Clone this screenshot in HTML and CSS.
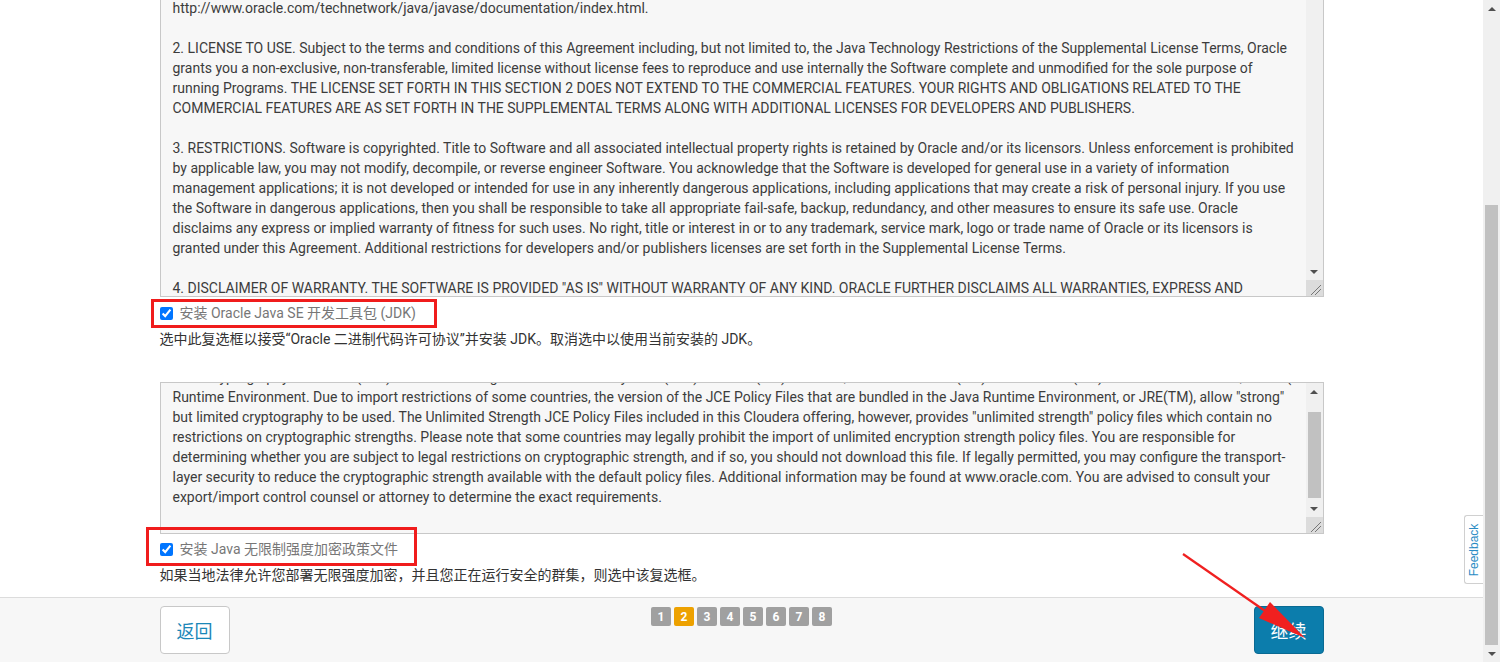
FILE: index.html
```html
<!DOCTYPE html>
<html lang="zh-CN">
<head>
<meta charset="utf-8">
<title>Cloudera 安装向导</title>
<link rel="stylesheet" href="styles.css">
</head>
<body>
<div class="page">
  <div class="content">
    <div class="wrap">
      <div class="ta ta1">
        <div class="ta-text">
          <div class="ta-inner ta1-inner">
            <div class="ln">http://www.oracle.com/technetwork/java/javase/documentation/index.html.</div>
            <div class="ln">&nbsp;</div>
            <div class="ln">2. LICENSE TO USE. Subject to the terms and conditions of this Agreement including, but not limited to, the Java Technology Restrictions of the Supplemental License Terms, Oracle</div>
            <div class="ln">grants you a non-exclusive, non-transferable, limited license without license fees to reproduce and use internally the Software complete and unmodified for the sole purpose of</div>
            <div class="ln">running Programs. THE LICENSE SET FORTH IN THIS SECTION 2 DOES NOT EXTEND TO THE COMMERCIAL FEATURES. YOUR RIGHTS AND OBLIGATIONS RELATED TO THE</div>
            <div class="ln">COMMERCIAL FEATURES ARE AS SET FORTH IN THE SUPPLEMENTAL TERMS ALONG WITH ADDITIONAL LICENSES FOR DEVELOPERS AND PUBLISHERS.</div>
            <div class="ln">&nbsp;</div>
            <div class="ln">3. RESTRICTIONS. Software is copyrighted. Title to Software and all associated intellectual property rights is retained by Oracle and/or its licensors. Unless enforcement is prohibited</div>
            <div class="ln">by applicable law, you may not modify, decompile, or reverse engineer Software. You acknowledge that the Software is developed for general use in a variety of information</div>
            <div class="ln">management applications; it is not developed or intended for use in any inherently dangerous applications, including applications that may create a risk of personal injury. If you use</div>
            <div class="ln">the Software in dangerous applications, then you shall be responsible to take all appropriate fail-safe, backup, redundancy, and other measures to ensure its safe use. Oracle</div>
            <div class="ln">disclaims any express or implied warranty of fitness for such uses. No right, title or interest in or to any trademark, service mark, logo or trade name of Oracle or its licensors is</div>
            <div class="ln">granted under this Agreement. Additional restrictions for developers and/or publishers licenses are set forth in the Supplemental License Terms.</div>
            <div class="ln">&nbsp;</div>
            <div class="ln">4. DISCLAIMER OF WARRANTY. THE SOFTWARE IS PROVIDED "AS IS" WITHOUT WARRANTY OF ANY KIND. ORACLE FURTHER DISCLAIMS ALL WARRANTIES, EXPRESS AND</div>
          </div>
        </div>
        <div class="sb">
          <div class="sb-track"></div>
          <div class="sb-btn"><span class="tri-down"></span></div>
          <div class="sb-corner"><svg width="17" height="16" viewBox="0 0 17 16"><path d="M5 15 L15 5 M9 15 L15 9" stroke="#777" stroke-width="1" fill="none"/></svg></div>
        </div>
      </div>

      <label class="check-row">
        <input type="checkbox" class="cb" checked>
        <span class="check-label">安装 Oracle Java SE 开发工具包 (JDK)</span>
      </label>
      <div class="desc">选中此复选框以接受“Oracle 二进制代码许可协议”并安装 JDK。取消选中以使用当前安装的 JDK。</div>

      <div class="ta ta2">
        <div class="ta-text">
          <div class="ta-inner ta2-inner">
            <div class="ln">Java Cryptography Extension (JCE) Unlimited Strength Jurisdiction Policy Files (JCE) for Java (TM) Platform, Standard Edition (TM) and the Java (TM) Runtime Environment, or JRE(TM) (the "Java</div>
            <div class="ln">Runtime Environment. Due to import restrictions of some countries, the version of the JCE Policy Files that are bundled in the Java Runtime Environment, or JRE(TM), allow "strong"</div>
            <div class="ln">but limited cryptography to be used. The Unlimited Strength JCE Policy Files included in this Cloudera offering, however, provides "unlimited strength" policy files which contain no</div>
            <div class="ln">restrictions on cryptographic strengths. Please note that some countries may legally prohibit the import of unlimited encryption strength policy files. You are responsible for</div>
            <div class="ln">determining whether you are subject to legal restrictions on cryptographic strength, and if so, you should not download this file. If legally permitted, you may configure the transport-</div>
            <div class="ln">layer security to reduce the cryptographic strength available with the default policy files. Additional information may be found at www.oracle.com. You are advised to consult your</div>
            <div class="ln">export/import control counsel or attorney to determine the exact requirements.</div>
          </div>
        </div>
        <div class="sb">
          <div class="sb-btn"><span class="tri-up"></span></div>
          <div class="sb-track sb-track2"><div class="sb-thumb sb-thumb2"></div></div>
          <div class="sb-btn"><span class="tri-down"></span></div>
          <div class="sb-corner"><svg width="17" height="16" viewBox="0 0 17 16"><path d="M5 15 L15 5 M9 15 L15 9" stroke="#777" stroke-width="1" fill="none"/></svg></div>
        </div>
      </div>

      <label class="check-row check-row2">
        <input type="checkbox" class="cb" checked>
        <span class="check-label">安装 Java 无限制强度加密政策文件</span>
      </label>
      <div class="desc">如果当地法律允许您部署无限强度加密，并且您正在运行安全的群集，则选中该复选框。</div>
    </div>
  </div>

  <div class="footer">
    <div class="footer-wrap">
      <button class="btn btn-back">返回</button>
      <div class="pager">
        <span class="pg">1</span>
        <span class="pg pg-active">2</span>
        <span class="pg">3</span>
        <span class="pg">4</span>
        <span class="pg">5</span>
        <span class="pg">6</span>
        <span class="pg">7</span>
        <span class="pg">8</span>
      </div>
      <button class="btn btn-next">继续</button>
    </div>
  </div>

  <div class="feedback"><span class="feedback-text">Feedback</span></div>
</div>

<div class="vscroll">
  <div class="sb-btn vs-btn"><span class="tri-up"></span></div>
  <div class="vs-track"><div class="vs-thumb"></div></div>
  <div class="sb-btn vs-btn"><span class="tri-down"></span></div>
</div>

<div class="mark mark1"></div>
<div class="mark mark2"></div>
<svg class="arrow" width="1500" height="662" viewBox="0 0 1500 662">
  <line x1="1183" y1="554" x2="1268" y2="613" stroke="#f02020" stroke-width="2.2"/>
  <polygon points="1305,638 1259,618 1270,602" fill="#f02020"/>
</svg>
</body>
</html>
```

FILE: styles.css
```css
* { box-sizing: border-box; }

html, body {
  margin: 0;
  padding: 0;
  height: 662px;
  overflow: hidden;
}

body {
  display: flex;
  font-family: Roboto, "Noto Sans CJK SC", sans-serif;
  font-size: 14px;
  color: #333;
  background: #fff;
  position: relative;
}

.page {
  width: 1483px;
  height: 662px;
  display: flex;
  flex-direction: column;
  position: relative;
}

.content {
  flex: 1;
  overflow: hidden;
  background: #fff;
}

.wrap {
  width: 1164px;
  margin: 0 auto;
}

/* textarea look-alike */
.ta {
  display: flex;
  border: 1px solid #c8c8c8;
  background: #f7f7f7;
  overflow: hidden;
}

.ta1 {
  height: 297px;
  border-top: 0;
}

.ta2 {
  height: 152px;
  margin-top: 33px;
}

.ta-text {
  flex: 1;
  overflow: hidden;
  padding: 0 12px;
}

.ta1-inner { margin-top: -2px; }
.ta2-inner { margin-top: -16px; }

.ln {
  line-height: 20px;
  white-space: nowrap;
  color: #3c3c3c;
}

/* inner scrollbar */
.sb {
  width: 17px;
  background: #f0f0f0;
  display: flex;
  flex-direction: column;
}

.sb-track {
  flex: 1;
  padding: 0 2px;
}

.sb-track2 {
  padding-top: 12px;
}

.sb-thumb {
  background: #c1c1c1;
}

.sb-thumb2 {
  height: 86px;
}

.sb-btn {
  height: 17px;
  display: flex;
  align-items: center;
  justify-content: center;
  flex-shrink: 0;
}

.sb-corner {
  height: 16px;
  background: #dcdcdc;
  flex-shrink: 0;
  display: flex;
}

.tri-up {
  width: 0;
  height: 0;
  border-left: 4px solid transparent;
  border-right: 4px solid transparent;
  border-bottom: 4px solid #505050;
}

.tri-down {
  width: 0;
  height: 0;
  border-left: 4px solid transparent;
  border-right: 4px solid transparent;
  border-top: 4px solid #505050;
}

/* checkbox rows */
.check-row {
  display: flex;
  align-items: center;
  height: 20px;
  margin-top: 6px;
}

.check-row2 {
  margin-top: 5px;
}

.cb {
  width: 13px;
  height: 13px;
  margin: 0 7px 0 0;
}

.check-label {
  color: #777;
  line-height: 20px;
}

.desc {
  margin-top: 6px;
  line-height: 20px;
  color: #333;
}

/* footer */
.footer {
  height: 65px;
  flex-shrink: 0;
  border-top: 1px solid #dcdcdc;
  background: #f7f7f7;
}

.footer-wrap {
  width: 1164px;
  margin: 0 auto;
  padding-top: 8px;
  display: grid;
  grid-template-columns: 1fr auto 1fr;
  align-items: start;
}

.btn {
  height: 48px;
  width: 70px;
  border-radius: 4px;
  font-family: Roboto, "Noto Sans CJK SC", sans-serif;
  font-size: 18px;
  cursor: pointer;
}

.btn-back {
  justify-self: start;
  background: #fff;
  border: 1px solid #c8c8c8;
  color: #1b87b8;
}

.btn-next {
  justify-self: end;
  background: #0c7dac;
  border: 1px solid #0a6a93;
  color: #fff;
}

.pager {
  display: flex;
  gap: 3px;
  margin-top: 1px;
}

.pg {
  width: 20px;
  height: 19px;
  border-radius: 2px;
  background: #a0a0a0;
  color: #fff;
  font-size: 12px;
  font-weight: bold;
  display: flex;
  align-items: center;
  justify-content: center;
}

.pg-active {
  background: #eda100;
}

/* feedback tab */
.feedback {
  position: absolute;
  right: 0;
  top: 515px;
  width: 19px;
  height: 69px;
  background: #fff;
  border: 1px solid #d0d0d0;
  border-right: 0;
  border-radius: 3px 0 0 3px;
  display: flex;
  align-items: center;
  justify-content: center;
}

.feedback-text {
  transform: rotate(-90deg);
  font-family: "Liberation Sans", Arial, sans-serif;
  font-size: 12px;
  color: #2a8cc4;
  white-space: nowrap;
}

/* page scrollbar */
.vscroll {
  width: 17px;
  height: 662px;
  background: #f0f0f0;
  display: flex;
  flex-direction: column;
}

.vs-track {
  flex: 1;
  padding: 188px 2px 0 2px;
}

.vs-thumb {
  height: 440px;
  background: #c1c1c1;
}

/* red annotations */
.mark {
  position: absolute;
  border: 3px solid #f01c1c;
  pointer-events: none;
}

.mark1 {
  left: 151px;
  top: 299px;
  width: 286px;
  height: 29px;
}

.mark2 {
  left: 146px;
  top: 527px;
  width: 271px;
  height: 39px;
}

.arrow {
  position: absolute;
  left: 0;
  top: 0;
  pointer-events: none;
}
```
